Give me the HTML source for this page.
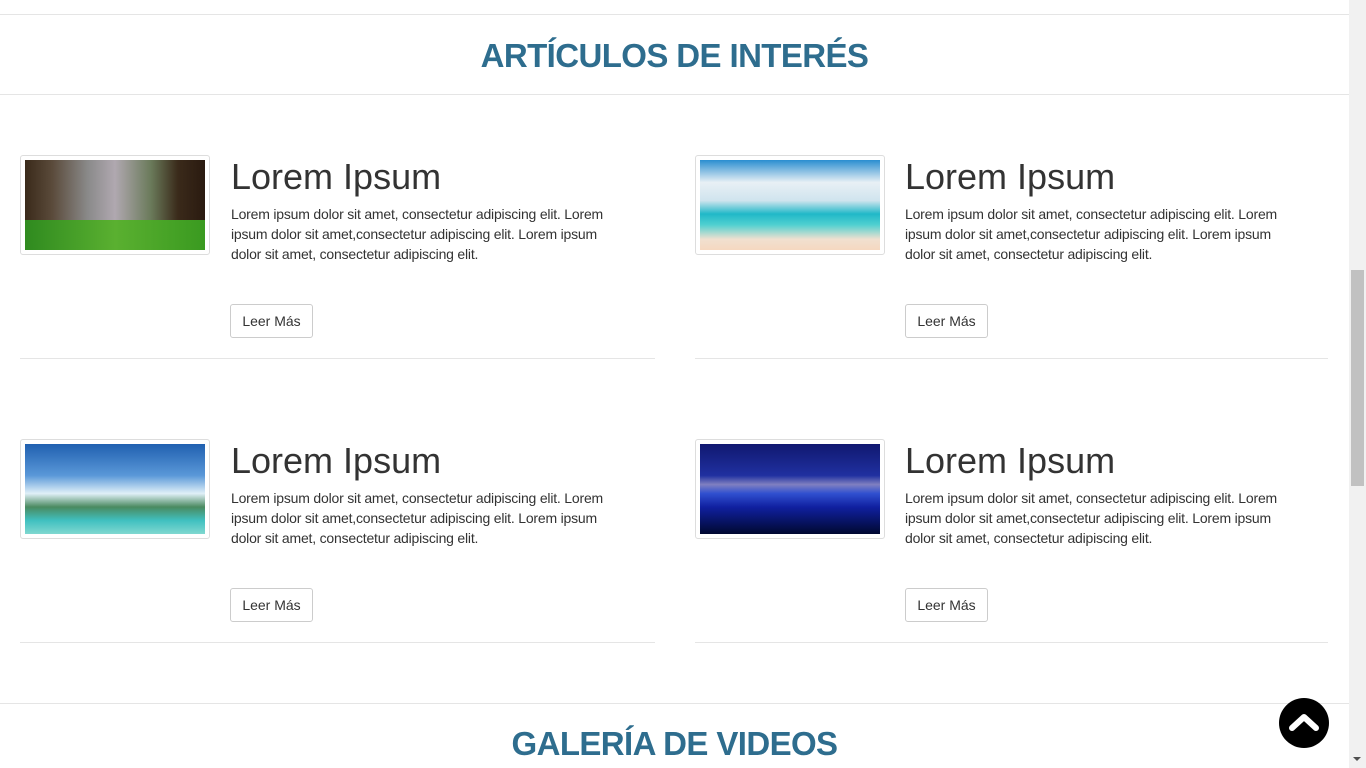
<!DOCTYPE html>
<html><head><meta charset="utf-8"><style>
body{margin:0;width:1366px;height:768px;overflow:hidden;background:#fff;font-family:"Liberation Sans",sans-serif;position:relative;color:#333}
.a{position:absolute}
.sb{left:1349px;top:0;width:17px;height:768px;background:#f1f1f1}
.thumb{left:1351px;top:270px;width:13px;height:216px;background:#c1c1c1}
.line{height:1px;background:#e5e5e5}
h2{position:absolute;margin:0;left:0;width:1349px;text-align:center;color:#2e6d8e;font-size:33px;font-weight:bold;letter-spacing:-0.6px}
.img{width:180px;height:90px;border:1px solid #ddd;padding:4px;border-radius:3px;background:#fff}
.img div{width:180px;height:90px}
.t{font-size:36px;color:#333;white-space:nowrap}
.p{font-size:14px;line-height:20px;width:398px;color:#333;letter-spacing:-0.2px}
.btn{width:81px;height:32px;border:1px solid #ccc;border-radius:3px;font-size:14px;text-align:center;line-height:32px;color:#333}
.top{left:1279px;top:698px;width:50px;height:50px;border-radius:50%;background:#000}
</style></head><body>
<div class="a line" style="left:0;top:14px;width:1349px"></div>
<h2 style="top:37px">ARTÍCULOS DE INTERÉS</h2>
<div class="a line" style="left:0;top:94px;width:1349px"></div>

<div class="a img" style="left:20px;top:155px"><div style="background:linear-gradient(90deg,#3a2a1a 0,#5a4a3a 15%,#8a8a8a 35%,#b0a8b0 50%,#6a7a5a 70%,#3a2a1a 85%,#2a1a10);position:relative"><div style="position:absolute;bottom:0;left:0;width:180px;height:30px;background:linear-gradient(90deg,#2f8a1f,#5ab030,#3a9a20)"></div></div></div>
<div class="a t" style="left:231px;top:156px">Lorem Ipsum</div>
<div class="a p" style="left:231px;top:204px">Lorem ipsum dolor sit amet, consectetur adipiscing elit. Lorem ipsum dolor sit amet,consectetur adipiscing elit. Lorem ipsum dolor sit amet, consectetur adipiscing elit.</div>
<div class="a btn" style="left:230px;top:304px">Leer Más</div>
<div class="a line" style="left:20px;top:358px;width:635px"></div>

<div class="a img" style="left:695px;top:155px"><div style="background:linear-gradient(180deg,#2a8ed0 0,#e8f0f5 25%,#d0e4ee 45%,#20b8c8 60%,#50d0d0 72%,#f0e0d0 88%,#f5d8c0)"></div></div>
<div class="a t" style="left:905px;top:156px">Lorem Ipsum</div>
<div class="a p" style="left:905px;top:204px">Lorem ipsum dolor sit amet, consectetur adipiscing elit. Lorem ipsum dolor sit amet,consectetur adipiscing elit. Lorem ipsum dolor sit amet, consectetur adipiscing elit.</div>
<div class="a btn" style="left:905px;top:304px">Leer Más</div>
<div class="a line" style="left:695px;top:358px;width:633px"></div>

<div class="a img" style="left:20px;top:439px"><div style="background:linear-gradient(180deg,#2060b0 0,#5a98d8 35%,#e0f0f8 55%,#4a8a60 70%,#40c0c0 85%,#80d8d0)"></div></div>
<div class="a t" style="left:231px;top:440px">Lorem Ipsum</div>
<div class="a p" style="left:231px;top:488px">Lorem ipsum dolor sit amet, consectetur adipiscing elit. Lorem ipsum dolor sit amet,consectetur adipiscing elit. Lorem ipsum dolor sit amet, consectetur adipiscing elit.</div>
<div class="a btn" style="left:230px;top:588px">Leer Más</div>
<div class="a line" style="left:20px;top:642px;width:635px"></div>

<div class="a img" style="left:695px;top:439px"><div style="background:linear-gradient(180deg,#101870 0,#2030a0 35%,#8080c0 45%,#3050d0 55%,#1020a0 70%,#000830)"></div></div>
<div class="a t" style="left:905px;top:440px">Lorem Ipsum</div>
<div class="a p" style="left:905px;top:488px">Lorem ipsum dolor sit amet, consectetur adipiscing elit. Lorem ipsum dolor sit amet,consectetur adipiscing elit. Lorem ipsum dolor sit amet, consectetur adipiscing elit.</div>
<div class="a btn" style="left:905px;top:588px">Leer Más</div>
<div class="a line" style="left:695px;top:642px;width:633px"></div>

<div class="a line" style="left:0;top:703px;width:1349px"></div>
<h2 style="top:725px">GALERÍA DE VIDEOS</h2>

<div class="a top"><svg width="50" height="50" viewBox="0 0 50 50"><path d="M13 30 L25 19 L37 30" stroke="#fff" stroke-width="6" fill="none" stroke-linecap="round" stroke-linejoin="round"/></svg></div>
<div class="a sb"></div>
<div class="a thumb"></div>
<div class="a" style="left:1353px;top:757px;width:0;height:0;border-left:4px solid transparent;border-right:4px solid transparent;border-top:4px solid #505050"></div>
</body></html>
